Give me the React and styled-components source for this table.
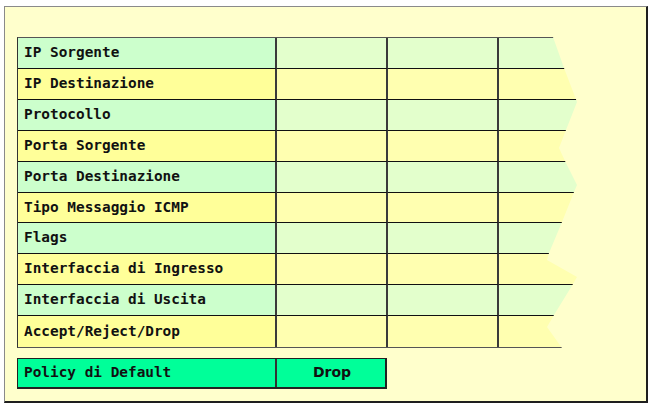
import React from "react";
import styled, { createGlobalStyle } from "styled-components";

const Global = createGlobalStyle`
  html, body { margin: 0; padding: 0; background: #ffffff; }
  body { font-family: "DejaVu Sans Mono", "Liberation Mono", monospace; }
`;

const Frame = styled.div`
  box-sizing: border-box;
  margin: 6px 0 0 4px;
  width: 644px;
  height: 397px;
  background: #ffffcc;
  border-top: 1px solid #8a8a8a;
  border-left: 1px solid #8a8a8a;
  border-right: 2px solid #1e1e1e;
  border-bottom: 2px solid #1e1e1e;
  padding: 30px 0 0 12px;
  display: flex;
  flex-direction: column;
  gap: 10px;
`;

const Table = styled.div`
  width: 561px;
  display: grid;
  grid-template-columns: 259px 111px 111px 80px;
  grid-template-rows: repeat(5, 31px) 30px repeat(4, 31px);
  border-top: 1px solid #555;
  border-left: 1px solid #333;
  border-bottom: 1px solid #555;
  clip-path: polygon(
    0 0, 536px 0, 547px 31px, 560px 65px, 549px 93px, 542px 111px,
    548px 124px, 560px 148px, 557px 155px, 545px 185px, 532px 216px,
    530px 223px, 560px 240px, 556px 247px, 537px 278px, 530px 290px,
    545px 311px, 0 311px
  );
`;

const Cell = styled.div`
  box-sizing: border-box;
  background: ${(p) => p.$bg};
  border-right: 2px solid #3a3a3a;
  border-bottom: ${(p) => (p.$last ? "none" : "1px solid #111")};
  display: flex;
  align-items: center;
  padding: 0 0 2px 6px;
  font-weight: bold;
  font-size: 14.4px;
  color: #111;
  white-space: nowrap;
`;

const PolicyRow = styled.div`
  width: 370px;
  display: grid;
  grid-template-columns: 259px 110px;
  height: 31px;
  box-sizing: border-box;
  border: 1px solid #222;
  border-bottom-width: 2px;
  border-right-width: 2px;
  background: #00ff99;
`;

const PolicyLabel = styled.div`
  display: flex;
  align-items: center;
  padding: 0 0 2px 6px;
  border-right: 2px solid #333;
  font-weight: bold;
  font-size: 14.4px;
  color: #111;
`;

const PolicyValue = styled.div`
  display: flex;
  align-items: center;
  justify-content: center;
  padding-bottom: 2px;
  font-family: "DejaVu Sans", "Liberation Sans", sans-serif;
  font-weight: bold;
  font-size: 14px;
  color: #111;
`;

const rows = [
  "IP Sorgente",
  "IP Destinazione",
  "Protocollo",
  "Porta Sorgente",
  "Porta Destinazione",
  "Tipo Messaggio ICMP",
  "Flags",
  "Interfaccia di Ingresso",
  "Interfaccia di Uscita",
  "Accept/Reject/Drop",
];

export default function App() {
  return (
    <>
      <Global />
      <Frame>
        <Table>
          {rows.map((label, i) => {
            const green = i % 2 === 0;
            const last = i === rows.length - 1;
            const labelBg = green ? "#ccffcc" : "#ffff99";
            const cellBg = green ? "#e3ffcc" : "#ffffb0";
            return (
              <React.Fragment key={label}>
                <Cell $bg={labelBg} $last={last}>{label}</Cell>
                <Cell $bg={cellBg} $last={last} />
                <Cell $bg={cellBg} $last={last} />
                <Cell $bg={cellBg} $last={last} />
              </React.Fragment>
            );
          })}
        </Table>
        <PolicyRow>
          <PolicyLabel>Policy di Default</PolicyLabel>
          <PolicyValue>Drop</PolicyValue>
        </PolicyRow>
      </Frame>
    </>
  );
}
